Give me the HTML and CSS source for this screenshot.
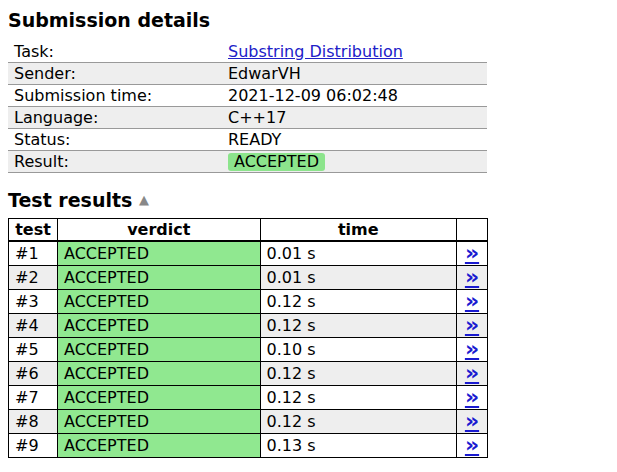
FILE: index.html
```html
<!DOCTYPE html>
<html>
<head>
<meta charset="utf-8">
<link rel="stylesheet" href="styles.css">
</head>
<body>
<h3 class="title">Submission details</h3>
<table class="summary">
<tr><td class="lbl">Task:</td><td><a href="#">Substring Distribution</a></td></tr>
<tr><td class="lbl">Sender:</td><td>EdwarVH</td></tr>
<tr><td class="lbl">Submission time:</td><td>2021-12-09 06:02:48</td></tr>
<tr><td class="lbl">Language:</td><td>C++17</td></tr>
<tr><td class="lbl">Status:</td><td>READY</td></tr>
<tr><td class="lbl">Result:</td><td><span class="badge">ACCEPTED</span></td></tr>
</table>
<h3 class="title second">Test results <span class="caret">&#9650;</span></h3>
<table class="tests">
<tr><th class="c-test">test</th><th class="c-verdict">verdict</th><th class="c-time">time</th><th class="c-link"></th></tr>
<tr><td>#1</td><td class="ok">ACCEPTED</td><td>0.01 s</td><td class="c-link"><a href="#">»</a></td></tr>
<tr><td>#2</td><td class="ok">ACCEPTED</td><td>0.01 s</td><td class="c-link"><a href="#">»</a></td></tr>
<tr><td>#3</td><td class="ok">ACCEPTED</td><td>0.12 s</td><td class="c-link"><a href="#">»</a></td></tr>
<tr><td>#4</td><td class="ok">ACCEPTED</td><td>0.12 s</td><td class="c-link"><a href="#">»</a></td></tr>
<tr><td>#5</td><td class="ok">ACCEPTED</td><td>0.10 s</td><td class="c-link"><a href="#">»</a></td></tr>
<tr><td>#6</td><td class="ok">ACCEPTED</td><td>0.12 s</td><td class="c-link"><a href="#">»</a></td></tr>
<tr><td>#7</td><td class="ok">ACCEPTED</td><td>0.12 s</td><td class="c-link"><a href="#">»</a></td></tr>
<tr><td>#8</td><td class="ok">ACCEPTED</td><td>0.12 s</td><td class="c-link"><a href="#">»</a></td></tr>
<tr><td>#9</td><td class="ok">ACCEPTED</td><td>0.13 s</td><td class="c-link"><a href="#">»</a></td></tr>
</table>
</body>
</html>
```
FILE: styles.css
```css
html, body {
  margin: 0;
  padding: 0;
  background: #fff;
}
body {
  padding: 8px 8px;
  font-family: "DejaVu Sans", Verdana, sans-serif;
  font-size: 16px;
  color: #000;
}
.title {
  font-size: 19px;
  font-weight: bold;
  margin: 0 0 9px 0;
  line-height: 24px;
}
.second {
  margin-top: 15px;
  margin-bottom: 6px;
}
.caret {
  color: #888;
  font-size: 13px;
  vertical-align: 3px;
}
.summary {
  border-collapse: collapse;
  width: 479px;
}
.summary td {
  padding: 0 6px;
  height: 21px;
  line-height: 20px;
  border-bottom: 1px solid #999;
}
.summary td.lbl {
  width: 202px;
}
.summary tr:nth-child(even) td {
  background: #eee;
}
a {
  color: #2020c8;
}
.badge {
  display: inline-block;
  background: #8ce48c;
  border-radius: 3px;
  padding: 0 6px;
  line-height: 18px;
}
.tests {
  border-collapse: collapse;
  width: 480px;
}
.tests th, .tests td {
  border: 1px solid #000;
  padding: 0 6px;
  height: 23px;
  text-align: left;
}
.tests th {
  text-align: center;
  font-weight: bold;
  height: 21px;
  border-bottom-width: 2px;
}
.tests tr:nth-child(odd) td {
  background: #eee;
}
.tests tr td.ok {
  background: #90e890;
}
.c-test { width: 36px; }
.c-verdict { width: 190px; }
.c-time { width: 184px; }
.c-link { width: 18px; }
.tests td.c-link {
  text-align: center;
  padding: 0 4px;
}
.c-link a {
  font-weight: bold;
  font-size: 22px;
  line-height: 20px;
  color: #1a1ad0;
}
```
